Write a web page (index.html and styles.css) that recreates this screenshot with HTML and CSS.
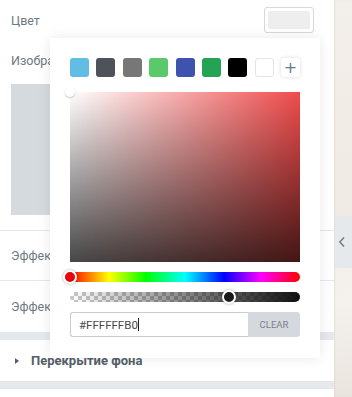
FILE: index.html
```html
<!DOCTYPE html>
<html lang="ru">
<head>
<meta charset="utf-8">
<link rel="stylesheet" href="styles.css">
</head>
<body>
<div class="app">
  <div class="panel">
    <div class="row row-color">
      <span class="label">Цвет</span>
      <span class="color-btn"><span class="color-fill"></span></span>
    </div>
    <div class="row-image">
      <span class="label">Изображение</span>
      <div class="image-ph"></div>
    </div>
    <div class="row row-effect bordered"><span class="label">Эффекты прокрутки</span></div>
    <div class="row row-effect"><span class="label">Эффекты мыши</span></div>
    <div class="band"></div>
    <div class="row section">
      <span class="caret-r"></span>
      <span class="section-title">Перекрытие фона</span>
    </div>
    <div class="band"></div>
  </div>
  <div class="side">
    <div class="toggle">
      <svg width="8" height="12" viewBox="0 0 8 12"><path d="M6 1.5 L1.8 6 L6 10.5" fill="none" stroke="#6d7882" stroke-width="1.4"/></svg>
    </div>
  </div>

  <div class="picker">
    <div class="swatches">
      <span class="sw" style="background:#61bde3"></span>
      <span class="sw" style="background:#4f5258"></span>
      <span class="sw" style="background:#777777"></span>
      <span class="sw" style="background:#5bc86a"></span>
      <span class="sw" style="background:#3d53ae"></span>
      <span class="sw" style="background:#23a455"></span>
      <span class="sw" style="background:#000000"></span>
      <span class="sw sw-white"></span>
      <span class="sw sw-add">+</span>
    </div>
    <div class="sat">
      <span class="sat-thumb"></span>
    </div>
    <div class="hue"><span class="thumb hue-thumb"></span></div>
    <div class="alpha"><div class="alpha-grad"></div><span class="thumb alpha-thumb"></span></div>
    <div class="input-row">
      <div class="hex">#FFFFFFB0<span class="cursor"></span></div>
      <div class="clear">CLEAR</div>
    </div>
  </div>
</div>
</body>
</html>
```

FILE: styles.css
```css
* { box-sizing: border-box; }
html, body { margin: 0; padding: 0; }
body {
  width: 352px;
  height: 397px;
  overflow: hidden;
  font-family: Roboto, "Noto Sans", sans-serif;
  background: #fff;
}
.app {
  position: relative;
  display: flex;
  width: 352px;
  height: 397px;
}
.panel {
  width: 334px;
  flex: none;
  display: flex;
  flex-direction: column;
  background: #fff;
}
.label {
  font-size: 12.5px;
  color: #6d7882;
  white-space: nowrap;
}
.row {
  display: flex;
  align-items: center;
  padding: 0 11px;
}
.row-color {
  height: 40px;
  justify-content: space-between;
  padding-right: 20px;
}
.color-btn {
  width: 50px;
  height: 26px;
  border: 1px solid #d5d8dc;
  border-radius: 3px;
  padding: 3px;
  display: flex;
}
.color-fill {
  flex: 1;
  background: #eeeeee;
  border-radius: 2px;
}
.row-image {
  display: flex;
  flex-direction: column;
  padding: 13px 11px 0;
  height: 190px;
}
.image-ph {
  margin-top: 16px;
  width: 220px;
  height: 131px;
  background: #d5dadf;
}
.row-effect {
  height: 51px;
}
.bordered {
  border-top: 1px solid #e6e9ec;
  border-bottom: 1px solid #e6e9ec;
}
.band {
  height: 8px;
  background: #e6e9ec;
  flex: none;
}
.section {
  height: 41px;
  padding-left: 15px;
}
.caret-r {
  width: 0;
  height: 0;
  border-top: 3.5px solid transparent;
  border-bottom: 3.5px solid transparent;
  border-left: 4px solid #556068;
  margin-right: 12px;
}
.section-title {
  font-size: 13px;
  font-weight: 700;
  color: #556068;
}
.side {
  flex: 1;
  background: linear-gradient(160deg, #f3efea 0%, #efeae4 55%, #f5f2ee 75%, #e9e4de 100%);
  box-shadow: inset 1px 0 2px rgba(0,0,0,0.06);
  padding-top: 216px;
  display: flex;
  flex-direction: column;
  align-items: flex-end;
}
.toggle {
  width: 17px;
  height: 52px;
  background: #e6e9ec;
  display: flex;
  align-items: center;
  justify-content: center;
  padding-right: 4px;
}

/* picker popup */
.picker {
  position: absolute;
  left: 50px;
  top: 38px;
  width: 270px;
  height: 320px;
  background: #fff;
  box-shadow: 0 0 12px rgba(0,0,0,0.09);
  padding: 20px 20px 0;
  display: flex;
  flex-direction: column;
}
.swatches {
  display: flex;
  justify-content: space-between;
  height: 19px;
}
.sw {
  width: 19px;
  height: 19px;
  border-radius: 3px;
}
.sw-white {
  background: #fff;
  border: 1px solid #e4e4e4;
}
.sw-add {
  background: #fff;
  box-shadow: 0 0 4px rgba(0,0,0,0.15);
  color: #6d7882;
  font-size: 16px;
  line-height: 19px;
  text-align: center;
  font-family: "DejaVu Sans", sans-serif;
}
.sat {
  position: relative;
  margin-top: 15px;
  height: 170px;
  background:
    linear-gradient(to top, rgba(0,0,0,0.72), rgba(0,0,0,0)),
    linear-gradient(to right, #fff, rgba(255,255,255,0)),
    #f04b4b;
}
.sat-thumb {
  position: absolute;
  left: -5px;
  top: -5px;
  width: 10px;
  height: 10px;
  border-radius: 50%;
  background: #fff;
  box-shadow: 0 1px 2px rgba(0,0,0,0.22);
}
.hue {
  position: relative;
  margin-top: 10px;
  height: 10px;
  border-radius: 5px;
  background: linear-gradient(to right, #f00 0%, #ff0 17%, #0f0 33%, #0ff 50%, #00f 67%, #f0f 83%, #f00 100%);
}
.alpha {
  position: relative;
  margin-top: 10px;
  height: 10px;
  border-radius: 5px;
  background-color: #fff;
  background-image:
    linear-gradient(45deg, #c8c8c8 25%, transparent 25%, transparent 75%, #c8c8c8 75%),
    linear-gradient(45deg, #c8c8c8 25%, transparent 25%, transparent 75%, #c8c8c8 75%);
  background-size: 8px 8px;
  background-position: 0 0, 4px 4px;
}
.alpha-grad {
  position: absolute;
  inset: 0;
  border-radius: 5px;
  background: linear-gradient(to right, rgba(17,17,17,0), #111);
}
.thumb {
  position: absolute;
  top: -2px;
  width: 14px;
  height: 14px;
  border-radius: 50%;
  border: 2px solid #fff;
  box-shadow: 0 0 3px rgba(0,0,0,0.35);
}
.hue-thumb {
  left: -7px;
  background: #e8000b;
}
.alpha-thumb {
  left: 152px;
  background: #1a1a1a;
}
.input-row {
  display: flex;
  margin-top: 10px;
  height: 25px;
}
.hex {
  flex: 1;
  border: 1px solid #c8ccd0;
  border-right: none;
  border-radius: 3px 0 0 3px;
  padding-left: 8px;
  font-size: 11.5px;
  color: #4a4a4a;
  display: flex;
  align-items: center;
}
.cursor {
  display: inline-block;
  width: 1px;
  height: 13px;
  background: #222;
}
.clear {
  width: 52px;
  background: #d5d8dc;
  border-radius: 0 3px 3px 0;
  color: #7a8089;
  font-size: 9.5px;
  display: flex;
  align-items: center;
  justify-content: center;
}
```
